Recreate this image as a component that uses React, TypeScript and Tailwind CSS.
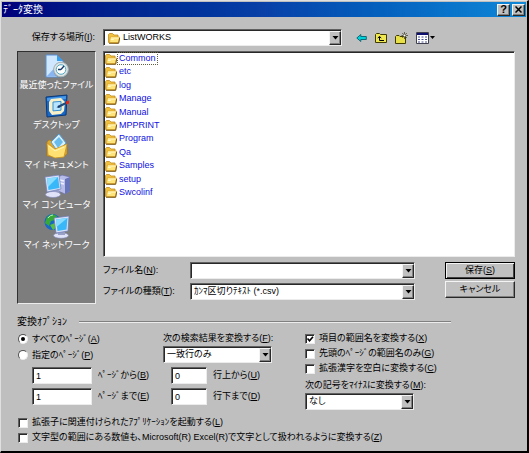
import { useState, type ReactNode } from "react";
import clsx from "clsx";

const SUNKEN =
  "border border-t-[#606060] border-l-[#606060] border-r-[#ececec] border-b-[#ececec] shadow-[inset_1px_1px_0_#282828] bg-white";
const RAISED =
  "border border-t-[#f4f4f4] border-l-[#f4f4f4] border-r-[#282828] border-b-[#282828] shadow-[inset_-1px_-1px_0_#808080] bg-[#c0c0c0]";

const FOLDERS = [
  "Common",
  "etc",
  "log",
  "Manage",
  "Manual",
  "MPPRINT",
  "Program",
  "Qa",
  "Samples",
  "setup",
  "Swcolinf",
];

function FolderIcon() {
  return (
    <svg className="h-3 w-3 shrink-0" viewBox="0 0 12 12" aria-hidden="true">
      <path d="M.5 10.500v-8l1-1h3l1.500 1.500h4v8z" fill="#f0c040" stroke="#c08c20" strokeWidth=".8" />
      <path d="M1.500 10.500l.8-5.500h9.200l-1 5.500z" fill="#ffe47c" stroke="#d8a028" strokeWidth=".7" />
      <path d="M3 6h7.800M2.800 7.500h3" stroke="#fffbd0" strokeWidth=".9" />
      <path d="M1 11.300h9.700l1-5.500" fill="none" stroke="#6c4808" strokeWidth=".9" />
    </svg>
  );
}

function RecentIcon() {
  return (
    <svg className="h-[26px] w-[26px]" viewBox="0 0 26 26" aria-hidden="true">
      <path d="M2 2h11l6 6v16H2z" fill="#d0e8ff" stroke="#5890d8" />
      <path d="M13 2v6h6z" fill="#38a0f0" />
      <path d="M3 23L16 9v14z" fill="#88b4f0" />
      <circle cx="17.500" cy="17" r="8" fill="#707c84" />
      <circle cx="17" cy="16.500" r="7.300" fill="#dce4e4" stroke="#a8b4b8" />
      <circle cx="17" cy="16.500" r="4.800" fill="#fff" stroke="#50a8c0" />
      <path d="M17 16.500l3-3.500M17 16.500h-3" stroke="#183868" strokeWidth="1.300" />
    </svg>
  );
}

function DesktopIcon() {
  return (
    <svg className="h-[26px] w-[26px]" viewBox="0 0 26 26" aria-hidden="true">
      <path d="M2 4l21-2-1 20-19 2z" fill="#1868c8" stroke="#083878" />
      <path d="M3 5l19-2-.2 3L3.200 8z" fill="#4898e8" />
      <path d="M7 6l10-1 4 4-1 9-3 3-9 1-3-4V9z" fill="#f8f0c8" />
      <path d="M9 9l8-.6v8.800l-8 .7z" fill="#b8e4ff" stroke="#3890d0" />
      <path d="M14 14l8-4" stroke="#204878" strokeWidth="2" />
      <path d="M12.500 14.500l2.500-2 1 2z" fill="#103060" />
      <path d="M22 8.500l3-1v3l-3 1z" fill="#e02818" />
    </svg>
  );
}

function DocumentsIcon() {
  return (
    <svg className="h-[26px] w-[26px]" viewBox="0 0 26 26" aria-hidden="true">
      <path d="M3 23V9l2-2 5 1 13 6v7l-4 3z" fill="#e0a828" stroke="#a87818" strokeWidth=".6" />
      <path d="M7 9l8-8 7 9-8 9z" fill="#d8f0ff" stroke="#58a0d8" />
      <path d="M10 9l5-5 4 5-5 6z" fill="#68bcec" />
      <path d="M3 10l8 6 12-5-3 13-9 1-7-3z" fill="#ffe070" stroke="#c89020" strokeWidth=".8" />
      <path d="M5 13l6 5 9-4" fill="none" stroke="#fff6b8" />
    </svg>
  );
}

function ComputerIcon() {
  return (
    <svg className="h-[26px] w-[26px]" viewBox="0 0 26 26" aria-hidden="true">
      <path d="M14 4l4-2 8 2v14l-5 3-7-3z" fill="#b8bce8" stroke="#6870a8" strokeWidth=".7" />
      <path d="M21 6l5-2v14l-5 3z" fill="#6874b8" />
      <path d="M16 7l4 1M16 10l4 1" stroke="#eef0ff" strokeWidth="1.300" />
      <path d="M8 17h7l1 4H8z" fill="#98a0c8" />
      <ellipse cx="9" cy="21.500" rx="7.500" ry="3" fill="#e0e2f8" stroke="#8088b8" strokeWidth=".6" />
      <path d="M1 4l14-2 2 14-14 3z" fill="#d8e0f8" stroke="#7080b8" strokeWidth=".7" />
      <path d="M3 5.500l11-1.500 1.500 11L4.500 17z" fill="#38b8f8" />
      <path d="M3 5.500l11-1.500-10 10z" fill="#88dcff" />
    </svg>
  );
}

function NetworkIcon() {
  return (
    <svg className="h-[26px] w-[26px]" viewBox="0 0 26 26" aria-hidden="true">
      <circle cx="8.500" cy="9" r="8" fill="#1868c8" />
      <path d="M3 4l5-3 5 2-2 4-4 1-2 5-4-3z" fill="#38a838" />
      <path d="M6 12l5-2 2 4-4 3z" fill="#58c040" />
      <path d="M4 5q2-3 5-3" stroke="#b0f0b8" fill="none" />
      <ellipse cx="17" cy="22.500" rx="7.500" ry="2.800" fill="#e0e2f8" stroke="#8088b8" strokeWidth=".6" />
      <path d="M14 18h7v4h-7z" fill="#98a0c8" />
      <path d="M10 5l15-2-1 15-12 2z" fill="#d8e0f8" stroke="#6878b0" strokeWidth=".7" />
      <path d="M12 6.500l11.500-1.500-1 11.500-9 1.500z" fill="#38b8f8" />
      <path d="M12 6.500l11.500-1.500-11 9z" fill="#88dcff" />
    </svg>
  );
}

const PLACES = [
  { label: "最近使ったファイル", Icon: RecentIcon },
  { label: "デスクトップ", Icon: DesktopIcon },
  { label: "マイ ドキュメント", Icon: DocumentsIcon },
  { label: "マイ コンピュータ", Icon: ComputerIcon },
  { label: "マイ ネットワーク", Icon: NetworkIcon },
];

function DownArrow() {
  return (
    <svg className="h-1 w-[7px]" viewBox="0 0 7 4" aria-hidden="true">
      <path d="M.5 0h6L3.500 3.500z" fill="#000" />
    </svg>
  );
}

function Accel({ children }: { children: string }) {
  return (
    <>
      (<u className="underline-offset-1">{children}</u>)
    </>
  );
}

interface SelectProps {
  id: string;
  options: string[];
  icon?: ReactNode;
  className?: string;
}

function Select({ id, options, icon, className }: SelectProps) {
  return (
    <div className={clsx("relative flex h-[17px] items-center", SUNKEN, className)}>
      {icon && <span className="pl-1">{icon}</span>}
      <select
        id={id}
        className="h-full min-w-0 flex-1 appearance-none bg-transparent pr-4 pl-[3px] outline-none"
      >
        {options.map((option) => (
          <option key={option}>{option}</option>
        ))}
      </select>
      <span
        className={clsx(
          "pointer-events-none absolute top-px right-0 bottom-0 flex w-3 items-center justify-center",
          RAISED
        )}
      >
        <DownArrow />
      </span>
    </div>
  );
}

function Check({ children, checked = false }: { children: ReactNode; checked?: boolean }) {
  return (
    <label className="flex h-[15px] items-center gap-1 whitespace-nowrap">
      <span className="relative flex">
        <input
          type="checkbox"
          defaultChecked={checked}
          className={clsx("peer h-[10px] w-[10px] appearance-none", SUNKEN)}
        />
        <svg
          className="pointer-events-none absolute inset-0 hidden h-[10px] w-[10px] peer-checked:block"
          viewBox="0 0 10 10"
          aria-hidden="true"
        >
          <path d="M2.500 4.500l2 2.200 3.500-4" fill="none" stroke="#000" strokeWidth="1.600" />
        </svg>
      </span>
      <span>{children}</span>
    </label>
  );
}

interface RadioProps {
  children: ReactNode;
  checked: boolean;
  onChange: () => void;
}

function Radio({ children, checked, onChange }: RadioProps) {
  return (
    <label className="flex h-4 items-center gap-1 whitespace-nowrap">
      <input
        type="radio"
        name="pages"
        checked={checked}
        onChange={onChange}
        className="flex h-[10px] w-[10px] appearance-none items-center justify-center rounded-full border border-t-[#505050] border-r-[#ececec] border-b-[#ececec] border-l-[#505050] bg-white checked:before:h-1 checked:before:w-1 checked:before:rounded-full checked:before:bg-black checked:before:content-['']"
      />
      <span>{children}</span>
    </label>
  );
}

interface NumberFieldProps {
  id: string;
  value: string;
  wide?: boolean;
  children: ReactNode;
}

function NumberField({ id, value, wide = false, children }: NumberFieldProps) {
  return (
    <div className="flex h-[17px] items-center gap-[6px] whitespace-nowrap">
      <input
        id={id}
        type="text"
        defaultValue={value}
        className={clsx("h-[17px] px-[3px] outline-none", SUNKEN, wide ? "w-[60px]" : "w-9")}
      />
      <label htmlFor={id}>{children}</label>
    </div>
  );
}

export default function App() {
  const [selected, setSelected] = useState("Common");
  const [pages, setPages] = useState("all");

  return (
    <div className="w-full border-t border-r-2 border-b-2 border-l border-t-[#e0e0e0] border-r-black border-b-black border-l-[#e0e0e0] bg-[#bfbfbf] p-px font-['Liberation_Sans','Noto_Sans_CJK_JP',sans-serif] text-[9px] leading-[15px] text-black [font-feature-settings:'palt']">
      {/* Title bar */}
      <header className="flex h-[15px] items-center justify-between bg-linear-to-r from-[#00007b] via-[#0840a8] to-[#1088d8] px-px text-white">
        <h1 className="text-[10px]">ﾃﾞｰﾀ変換</h1>
        <div className="flex gap-[2px]">
          <button
            type="button"
            aria-label="ヘルプ"
            className={clsx("flex h-3 w-[13px] items-center justify-center text-[11px] font-bold text-black", RAISED)}
          >
            ?
          </button>
          <button
            type="button"
            aria-label="閉じる"
            className={clsx("flex h-3 w-[13px] items-center justify-center", RAISED)}
          >
            <svg className="h-[7px] w-[7px]" viewBox="0 0 7 7" aria-hidden="true">
              <path d="M.5.5l6 6M6.500.5l-6 6" stroke="#000" strokeWidth="1.500" />
            </svg>
          </button>
        </div>
      </header>

      <main className="pt-3 pr-[11px] pb-[5px] pl-[15px]">
        {/* Current folder */}
        <div className="flex items-center">
          <label htmlFor="location" className="w-[86px] pr-2 text-right whitespace-nowrap">
            保存する場所<Accel>I</Accel>:
          </label>
          <Select id="location" options={["ListWORKS"]} icon={<FolderIcon />} className="w-[239px]" />
          <div className="ml-[14px] flex items-center gap-2">
            <button type="button" aria-label="戻る">
              <svg className="h-3 w-[11px]" viewBox="0 0 11 12" aria-hidden="true">
                <path d="M.8 6l4-3.500v2h5.500v3H4.800v2z" fill="#00d0d8" stroke="#086070" strokeWidth=".9" />
              </svg>
            </button>
            <button type="button" aria-label="1つ上のフォルダへ">
              <svg className="h-3 w-3" viewBox="0 0 12 12" aria-hidden="true">
                <path d="M.5 10.500v-8l1-1h3l1 1h6v8z" fill="#f0e850" stroke="#403c00" />
                <path d="M4.500 5v3.500H9M2.800 6.200L4.500 4.300l1.700 1.900" fill="none" stroke="#000" />
              </svg>
            </button>
            <button type="button" aria-label="新しいフォルダ">
              <svg className="h-3 w-[13px]" viewBox="0 0 13 12" aria-hidden="true">
                <path d="M.5 11.500V4.500l1-1h2.500l1 1h5.500v7z" fill="#e8e048" stroke="#403c00" />
                <path d="M9.500 0v7M6.500 3.500h6.500M7.300 1l4.500 5M11.800 1l-4.500 5" stroke="#484830" strokeWidth=".8" />
                <circle cx="9.500" cy="3.500" r="1" fill="#fff" />
              </svg>
            </button>
            <button type="button" aria-label="表示" className="flex items-center gap-px">
              <svg className="h-3 w-[13px]" viewBox="0 0 13 12" aria-hidden="true">
                <path d="M.5.5h12v11H.5z" fill="#fff" stroke="#404050" />
                <path d="M1 1h11v2H1z" fill="#101070" />
                <path d="M2 5h2M5.500 5h2M9 5h2M2 7.500h2M5.500 7.500h2M9 7.500h2M2 10h2M5.500 10h2M9 10h2" stroke="#485090" />
              </svg>
              <svg className="h-[3px] w-[5px]" viewBox="0 0 5 3" aria-hidden="true">
                <path d="M0 0h5L2.500 3z" fill="#000" />
              </svg>
            </button>
          </div>
        </div>

        <div className="mt-[5px] flex gap-[7px]">
          {/* Places bar */}
          <nav className="flex h-[253px] w-[79px] shrink-0 flex-col border border-t-[#303030] border-r-[#ececec] border-b-[#ececec] border-l-[#303030] bg-[#7d7d7d] pt-px leading-[13px] text-white">
            {PLACES.map(({ label, Icon }) => (
              <button
                key={label}
                type="button"
                className="flex h-10 flex-col items-center whitespace-nowrap"
              >
                <Icon />
                {label}
              </button>
            ))}
          </nav>

          <div className="min-w-0 flex-1">
            {/* Folder list */}
            <div className={clsx("h-[206px] pl-px", SUNKEN)}>
              <ul className="flex h-[147px] flex-col justify-between">
                {FOLDERS.map((name) => (
                  <li key={name} className="flex">
                    <button
                      type="button"
                      onClick={() => setSelected(name)}
                      className="flex h-[13px] items-center leading-[11px] text-[#1010e0]"
                    >
                      <FolderIcon />
                      <span
                        className={clsx(
                          "border px-px",
                          selected === name ? "border-dotted border-[#606040]" : "border-transparent"
                        )}
                      >
                        {name}
                      </span>
                    </button>
                  </li>
                ))}
              </ul>
            </div>

            <div className="mt-[5px] flex justify-between">
              <div className="space-y-1">
                <div className="flex items-center">
                  <label htmlFor="filename" className="w-[87px] whitespace-nowrap">
                    ファイル名<Accel>N</Accel>:
                  </label>
                  <div className={clsx("flex h-[17px] w-[225px] pt-px", SUNKEN)}>
                    <input
                      id="filename"
                      type="text"
                      className="min-w-0 flex-1 bg-transparent px-[3px] outline-none"
                    />
                    <button
                      type="button"
                      aria-label="履歴"
                      className={clsx("flex w-3 items-center justify-center", RAISED)}
                    >
                      <DownArrow />
                    </button>
                  </div>
                </div>
                <div className="flex items-center">
                  <label htmlFor="filetype" className="w-[87px] whitespace-nowrap">
                    ファイルの種類<Accel>T</Accel>:
                  </label>
                  <Select id="filetype" options={["ｶﾝﾏ区切りﾃｷｽﾄ (*.csv)"]} className="w-[225px]" />
                </div>
              </div>
              <div className="flex w-[70px] flex-col gap-[2px]">
                <button
                  type="button"
                  className="h-[17px] border border-black bg-[#c0c0c0] leading-[13px] shadow-[inset_1px_1px_0_#f4f4f4,inset_-1px_-1px_0_#404040]"
                >
                  保存<Accel>S</Accel>
                </button>
                <button type="button" className={clsx("h-[17px] leading-[13px]", RAISED)}>
                  キャンセル
                </button>
              </div>
            </div>
          </div>
        </div>

        {/* Conversion options */}
        <section className="mt-[10px]">
          <div className="flex items-center gap-3 pr-16">
            <h2 className="text-[10px] whitespace-nowrap">変換ｵﾌﾟｼｮﾝ</h2>
            <div className="h-[2px] flex-1 border-t border-b border-t-[#808080] border-b-[#ececec]" />
          </div>

          <div className="mt-[2px] flex pl-px">
            <div className="w-[145px]">
              <Radio checked={pages === "all"} onChange={() => setPages("all")}>
                すべてのﾍﾟｰｼﾞ<Accel>A</Accel>
              </Radio>
              <Radio checked={pages === "range"} onChange={() => setPages("range")}>
                指定のﾍﾟｰｼﾞ<Accel>P</Accel>
              </Radio>
              <div className="mt-[4px] space-y-1 pl-[14px]">
                <NumberField id="page-from" value="1" wide>
                  ﾍﾟｰｼﾞから<Accel>B</Accel>
                </NumberField>
                <NumberField id="page-to" value="1" wide>
                  ﾍﾟｰｼﾞまで<Accel>E</Accel>
                </NumberField>
              </div>
            </div>

            <div className="w-[142px]">
              <label htmlFor="result" className="block whitespace-nowrap">
                次の検索結果を変換する<Accel>F</Accel>:
              </label>
              <Select id="result" options={["一致行のみ"]} className="w-[109px]" />
              <div className="mt-[4px] space-y-1 pl-2">
                <NumberField id="line-from" value="0">
                  行上から<Accel>U</Accel>
                </NumberField>
                <NumberField id="line-to" value="0">
                  行下まで<Accel>D</Accel>
                </NumberField>
              </div>
            </div>

            <div>
              <Check checked>
                項目の範囲名を変換する<Accel>X</Accel>
              </Check>
              <Check>
                先頭のﾍﾟｰｼﾞの範囲名のみ<Accel>G</Accel>
              </Check>
              <Check>
                拡張漢字を空白に変換する<Accel>C</Accel>
              </Check>
              <label htmlFor="minus" className="mt-[2px] block whitespace-nowrap">
                次の記号をﾏｲﾅｽに変換する<Accel>M</Accel>:
              </label>
              <Select id="minus" options={["なし"]} className="w-[109px]" />
            </div>
          </div>

          <div className="mt-[5px] pl-px">
            <Check>
              拡張子に関連付けられたｱﾌﾟﾘｹｰｼｮﾝを起動する<Accel>L</Accel>
            </Check>
            <Check>
              文字型の範囲にある数値も、Microsoft(R) Excel(R)で文字として扱われるように変換する
              <Accel>Z</Accel>
            </Check>
          </div>
        </section>
      </main>
    </div>
  );
}
